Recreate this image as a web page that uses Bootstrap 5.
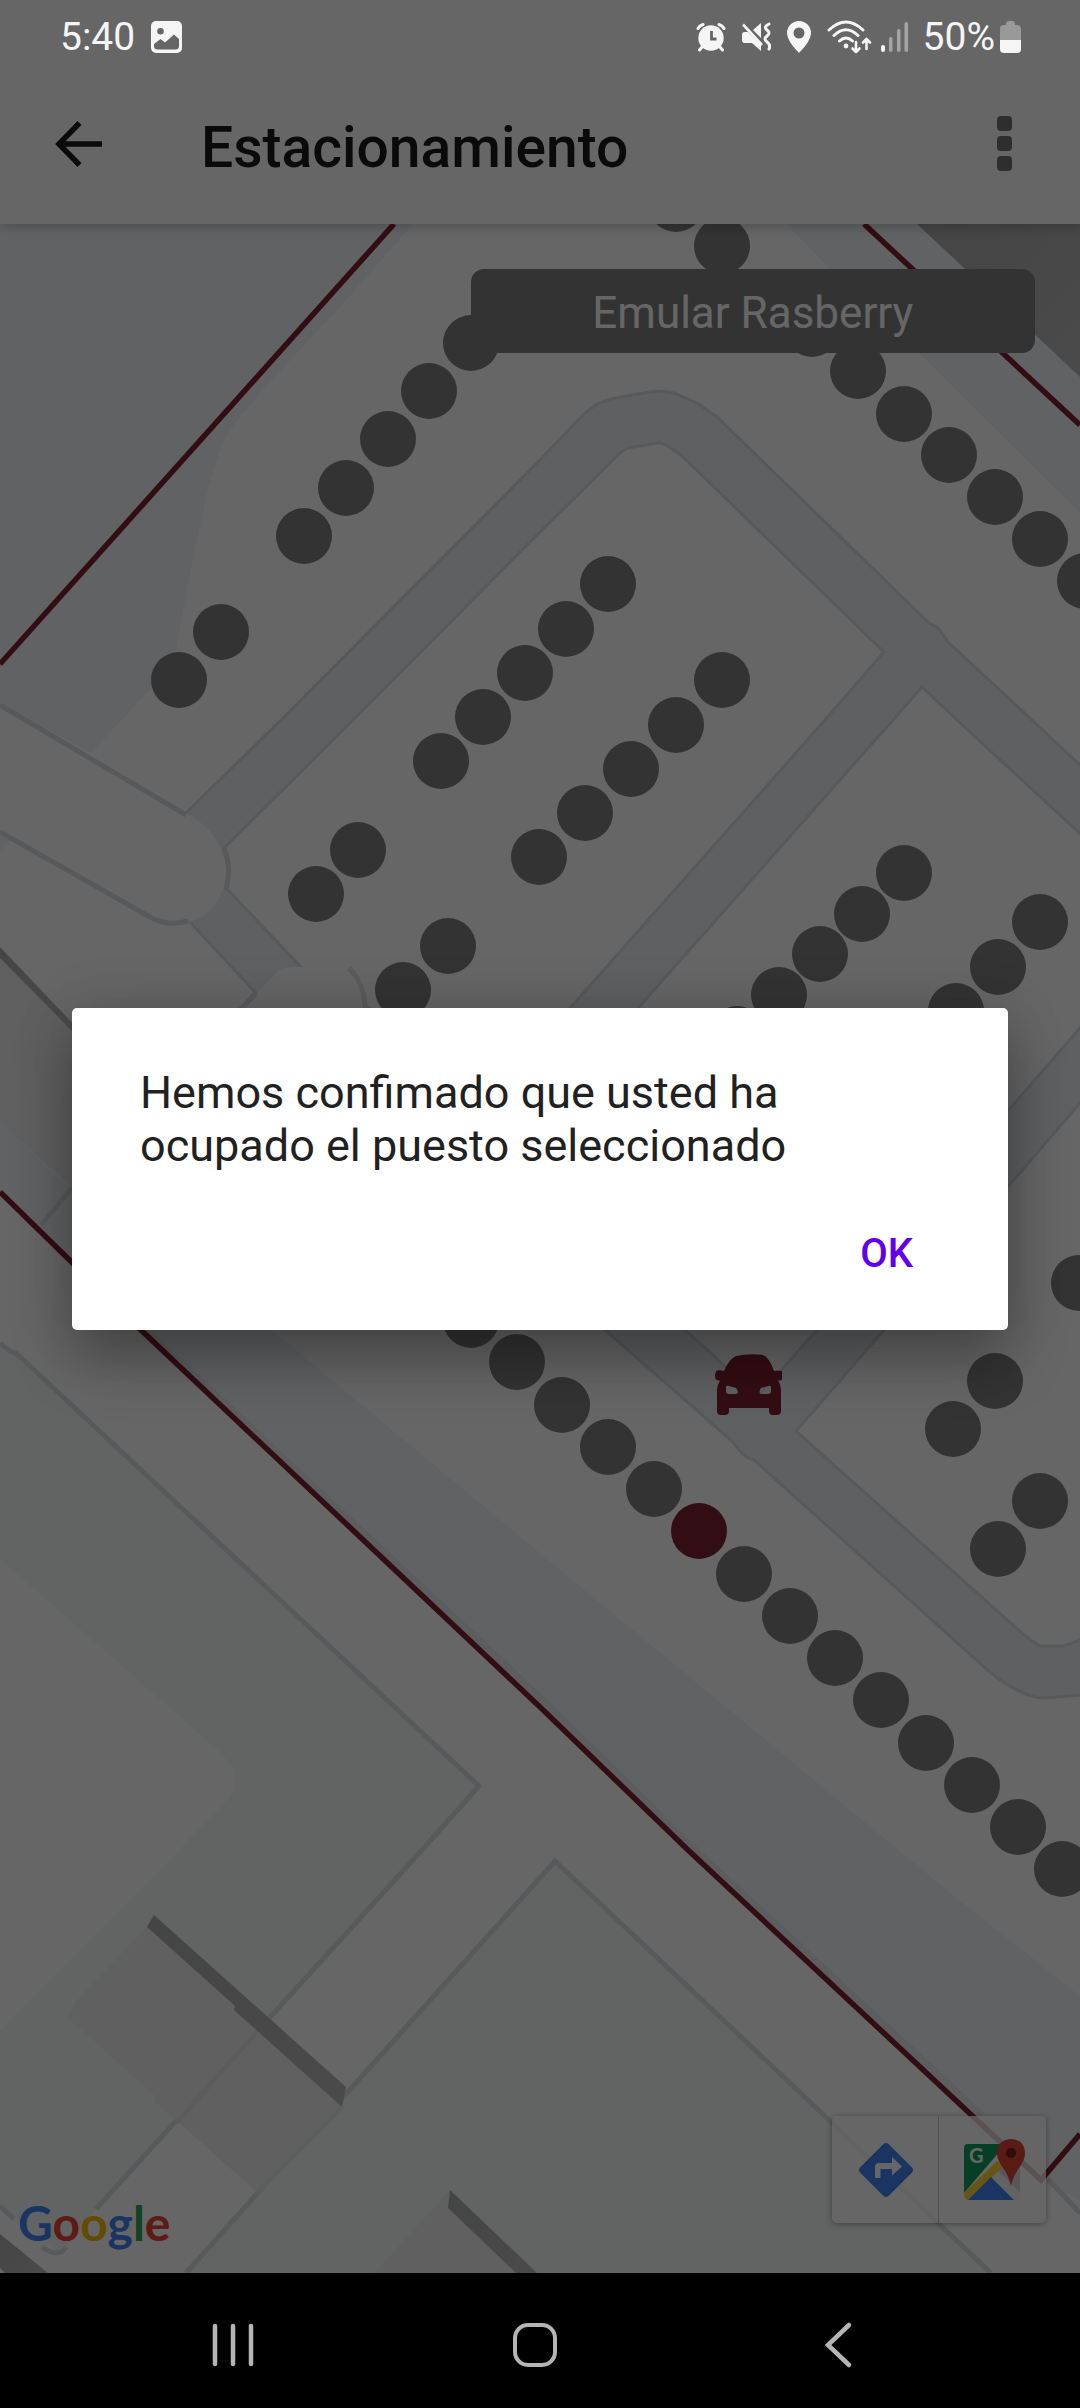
<!DOCTYPE html>
<html lang="es">
<head>
<meta charset="utf-8">
<meta name="viewport" content="width=device-width, initial-scale=1">
<title>Estacionamiento</title>
<link href="https://cdn.jsdelivr.net/npm/bootstrap@5.3.0/dist/css/bootstrap.min.css" rel="stylesheet">
<style>
  body { font-family: Roboto, "Noto Sans", sans-serif; background: #000; color: #212121; }
  svg { display: block; flex: none; }
  .status-bar { height: 74px; padding: 0 59px 0 60px; color: #f5f5f5; font-size: 39px; line-height: 48px; z-index: 1060; }
  .status-icons { gap: 15px; }
  .status-battery { gap: 5px; }
  .status-clock { gap: 16px; }
  .app-screen { background: #fff; }
  .app-bar { height: 224px; padding: 72px 64px 8px 54px; box-shadow: 0 3px 12px rgba(0, 0, 0, .22); z-index: 2; }
  .app-title { font-size: 57px; line-height: 64px; font-weight: 500; color: #191919; margin: 8px 0 0 96px; }
  .map-art { width: 100%; height: auto; }
  .map-top { padding: 45px 45px 0; }
  .btn-emular { width: 57%; height: 84px; border-radius: 13px; background: #808080; color: #fff; font-size: 44px; line-height: 52px; padding: 4px 12px 0; border: 0; }
  .btn-emular:hover { background: #707070; color: #fff; }
  .map-foot { padding: 0 34px 50px 18px; }
  .map-tools { background: rgba(255, 255, 255, .78); border-radius: 5px; box-shadow: 0 1px 6px rgba(0, 0, 0, .35); }
  .map-tools .btn { width: 107px; height: 107px; padding: 0; border: 0; border-radius: 0; }
  .map-tools .btn + .btn { box-shadow: -1px 0 0 rgba(0, 0, 0, .22); }
  .g-logo { font-family: Lato, sans-serif; font-weight: 700; font-size: 48px; line-height: 60px; margin-bottom: -30px; }
  .g-blue { color: #4285f4; } .g-red { color: #ea4335; } .g-yellow { color: #fbbc05; } .g-green { color: #34a853; }
  .scrim { background: rgba(0, 0, 0, .6); padding: 65px 72px 0; z-index: 1050; }
  .alert-sheet { background: #fff; border-radius: 5px; padding: 58px 52px 22px 68px; box-shadow: 0 30px 60px rgba(0, 0, 0, .3), 0 0 60px rgba(0, 0, 0, .12); }
  .alert-text { font-size: 45px; line-height: 53px; margin: 0 60px 28px 0; color: #212121; }
  .btn-ok { height: 108px; padding: 0 43px; border: 0; font-size: 40px; line-height: 46px; font-weight: 500; color: #6200ee; }
  .system-nav { background: #000; height: 135px; padding: 8px 9px 0 0; }
  .system-nav .btn { width: 28.200%; height: 127px; padding: 0; border: 0; }
</style>
</head>
<body>
<div class="d-flex flex-column min-vh-100">
  <div class="app-screen position-relative flex-grow-1 d-flex flex-column">

    <div class="status-bar position-absolute top-0 start-0 end-0 d-flex justify-content-between align-items-center">
      <div class="status-clock d-flex align-items-center">
        <span>5:40</span>
        <svg width="31" height="32" viewBox="0 0 31 32" aria-hidden="true"><path fill="#f5f5f5" fill-rule="evenodd" d="M5 0h21a5 5 0 0 1 5 5v22a5 5 0 0 1-5 5H5a5 5 0 0 1-5-5V5a5 5 0 0 1 5-5ZM9.500 7a3.300 3.300 0 1 0 .01 6.600A3.300 3.300 0 0 0 9.500 7ZM3 23v2q0 3.500 3.500 3.500h18q3.500 0 3.500-3.500v-7l-5-4.500-9 8-4.500-3.500Z"/></svg>
      </div>
      <div class="status-icons d-flex align-items-center">
        <svg width="30" height="30" viewBox="0 0 30 30" aria-hidden="true"><g fill="none" stroke="#f5f5f5" stroke-width="3" stroke-linecap="round"><path d="M2 6.500Q3.500 3.500 7 2.500M28 6.500Q26.500 3.500 23 2.500M6 25l-2.500 3M24 25l2.500 3"/></g><circle cx="15" cy="16" r="12.700" fill="#f5f5f5"/><path d="M15.500 9v8h5" fill="none" stroke="#666" stroke-width="2.800"/></svg>
        <svg width="30" height="30" viewBox="0 0 30 30" aria-hidden="true"><path fill="#f5f5f5" d="M3.500 10H7l13 13v6l-9-8H3.500Q1 21 1 18v-5q0-3 2.500-3ZM12 8l8-7v15Z"/><path d="M2 2.500 21 23" stroke="#f5f5f5" stroke-width="2.600"/><path d="M28 2q-6 3-2 6t0 6 0 6 2 7" fill="none" stroke="#f5f5f5" stroke-width="3" stroke-linecap="round"/></svg>
        <svg width="26" height="32" viewBox="0 0 26 32" aria-hidden="true"><path fill="#f5f5f5" fill-rule="evenodd" d="M13 0a12 12 0 0 1 12 12q0 8-12 20Q1 20 1 12A12 12 0 0 1 13 0Zm0 6.500a5.500 5.500 0 1 0 .01 11A5.500 5.500 0 0 0 13 6.500Z"/></svg>
        <svg width="81" height="34" viewBox="0 0 81 34" aria-hidden="true"><g fill="none" stroke="#f5f5f5" stroke-width="3" stroke-linecap="round" stroke-linejoin="round"><path d="M2 10Q19-6 36 10M7 15.500q12-11.500 24 0M12.500 21q6.500-6 13 0"/><path stroke-width="2.600" d="M29 22v10m-3.500-3.500L29 32l3.500-3.500M39.500 29V19m-3.500 3.500 3.500-3.500 3.500 3.500"/></g><circle cx="19" cy="26" r="2.400" fill="#f5f5f5"/><rect x="54" y="25" width="4" height="7" rx="2" fill="#f5f5f5"/><g fill="#a3a3a3"><rect x="62" y="17" width="3.500" height="15" rx="1.700"/><rect x="70" y="9" width="3.500" height="23" rx="1.700"/><rect x="77.500" y="2" width="3.500" height="30" rx="1.700"/></g></svg>
        <div class="status-battery d-flex align-items-center">
          <span>50%</span>
          <svg width="21" height="32" viewBox="0 0 21 32" aria-hidden="true"><path fill="#999" d="M6 3q0-3 3-3h3q3 0 3 3v1h2q4 0 4 4v11H0V8q0-4 4-4h2Z"/><path fill="#f5f5f5" d="M0 19h21v9q0 4-4 4H4q-4 0-4-4Z"/></svg>
        </div>
      </div>
    </div>

    <header class="app-bar position-relative bg-white d-flex align-items-center">
      <button type="button" class="btn p-0 border-0" aria-label="Atrás">
        <svg width="51" height="48" viewBox="0 0 51 48"><path d="M48 24H7M25.500 3 5 24l20.500 21" fill="none" stroke="#191919" stroke-width="5.500"/></svg>
      </button>
      <h1 class="app-title flex-grow-1">Estacionamiento</h1>
      <button type="button" class="btn p-0 border-0" aria-label="Más opciones">
        <svg width="23" height="56" viewBox="0 0 23 56"><g fill="#737373"><rect x="4" y="0" width="15" height="15" rx="4"/><rect x="4" y="20" width="15" height="15" rx="4"/><rect x="4" y="40" width="15" height="15" rx="4"/></g></svg>
      </button>
    </header>

    <main class="position-relative">
      <svg class="map-art" viewBox="0 224 1080 2049" role="img" aria-label="Mapa del estacionamiento">
        <defs>
          <linearGradient id="wall" x1="0" y1="0" x2="1" y2="1"><stop offset="0" stop-color="#acacac"/><stop offset="1" stop-color="#bababa"/></linearGradient>
        </defs>
        <rect y="224" width="1080" height="2049" fill="#fff"/>
        <!-- paved surroundings -->
        <g fill="#f3f6fa">
          <path d="M0 224H413L344 303 269 383 236 422Q222 440 217 460L207 493 189 580 176 650 150 690 91 753 0 703Z"/>
          <path d="M786 224H1080V513L919 353 829 268Z"/>
          <path d="M0 828l10 12-10 11ZM0 1122 69 1187 272 1330 540 1553 953 1895 1080 1996V2200L1041 2181 688 1850 540 1707 141 1330 0 1192Z"/>
        </g>
        <path d="M917 224H1080V377L964 268Z" fill="url(#wall)"/>
        <!-- green areas -->
        <g fill="#f4f9f7">
          <path d="M0 1343 17 1354 479 1786 422 1850 96 2209 59 2252 0 2206V2031L179 1850 227 1800Q240 1784 232 1766L220 1752 0 1559Z"/>
          <path d="M555 1861 829 2120 991 2273H186L346 2094Z"/>
        </g>
        <g fill="none" stroke="#dddfe3" stroke-width="5" stroke-linejoin="round">
          <path d="M0 1343Q10 1352 17 1354L479 1786 422 1850 96 2209M0 2206 14 2219M42 2247q17 12 24 0M186 2273 346 2094 555 1861 829 2120 991 2273M1048 2179 1080 2213M72 1188 41 1225"/>
          <path d="M146 1330 545 1702 690 1845 982 2115" stroke-opacity=".6" stroke-width="7"/>
        </g>
        <!-- parking lanes -->
        <path fill="#eef0f4" fill-rule="evenodd" stroke="#dddfe3" stroke-width="3" d="M186 813 281 720 540 460 585 413 597 404Q606 400 616 398L650 392Q662 390 674 393L697 403 717 417 929 623 938 628 948 642 1032 720 1100 784V1694L1070 1696 1043 1698Q1022 1697 991 1673L754 1460Q745 1458 740 1451L733 1442 605 1330 256 993 188 920ZM226 888 301 967 500 1087 571 1007 825 720 884 652 681 455 666 445Q661 442 657 443L628 448 621 452 540 532 353 720 224 848ZM922 687 893 720 639 1007 520 1187 685 1330 758 1396 817 1330 1080 1028 1100 1005V852L957 720ZM1100 1080 884 1330 796 1431 1024 1635 1039 1646 1063 1646Q1075 1643 1100 1630Z"/>
        <!-- access streets -->
        <path fill="#fff" d="M0 705 186 813Q222 832 227 870 222 915 188 922 168 925 150 915L0 830Z"/>
        <path fill="none" stroke="#dddfe3" stroke-width="5" d="M0 705 186 815M0 832 150 917Q168 927 188 921M224 848q8 18 2 42M256 993 240 1010"/>
        <path fill="#fff" d="M258 992 279 970Q290 965 301 967H351Q366 984 367 1007V1040H248Z"/>
        <path fill="none" stroke="#e4e6ea" stroke-width="5" d="M349 968Q365 984 365 1010"/>
        <!-- buildings -->
        <g fill="#f0f0f0">
          <path d="M0 958 72 1030V1188L0 1122Z"/>
          <path d="M148 1926 76 2001 67 2017 155 2096V2102L257 2192 342 2107 234 2006Z"/>
          <path d="M450 2190 374 2273H516L448 2208Z"/>
        </g>
        <path d="M270 2017 177 2122" stroke="#e6e6e8" stroke-width="5"/>
        <path d="M342 2107 257 2192" stroke="#e8e8ea" stroke-width="5"/>
        <g fill="url(#wall)">
          <path d="M0 947 80 1031H72L0 958Z"/>
          <path d="M154 1915 346 2087 342 2107 234 2010 235 2006 147 1927Z"/>
          <path d="M450 2190 537 2273H516L448 2208Z"/>
          <path d="M0 2234 48 2273H5L0 2268Z"/>
        </g>
        <!-- lot boundary -->
        <g fill="none" stroke="#802132" stroke-width="5.500">
          <path d="M394 224 0 664M864 224 1080 425M0 1192 141 1330 540 1707 688 1850 1041 2180 1080 2134"/>
        </g>
        <!-- parking spots -->
        <g fill="#808080">
          <circle cx="179" cy="680" r="28"/><circle cx="221" cy="632" r="28"/><circle cx="304" cy="536" r="28"/><circle cx="346" cy="488" r="28"/><circle cx="388" cy="439" r="28"/><circle cx="429" cy="391" r="28"/><circle cx="471" cy="343" r="28"/>
          <circle cx="676" cy="204" r="28"/><circle cx="722" cy="246" r="28"/><circle cx="812" cy="329" r="28"/><circle cx="858" cy="371" r="28"/><circle cx="904" cy="414" r="28"/><circle cx="949" cy="455" r="28"/><circle cx="995" cy="497" r="28"/><circle cx="1040" cy="539" r="28"/><circle cx="1085" cy="581" r="28"/>
          <circle cx="608" cy="584" r="28"/><circle cx="566" cy="629" r="28"/><circle cx="525" cy="673" r="28"/><circle cx="483" cy="717" r="28"/><circle cx="441" cy="761" r="28"/><circle cx="358" cy="850" r="28"/><circle cx="316" cy="894" r="28"/>
          <circle cx="722" cy="680" r="28"/><circle cx="676" cy="725" r="28"/><circle cx="631" cy="769" r="28"/><circle cx="585" cy="813" r="28"/><circle cx="539" cy="857" r="28"/><circle cx="448" cy="946" r="28"/><circle cx="403" cy="990" r="28"/>
          <circle cx="904" cy="873" r="28"/><circle cx="862" cy="914" r="28"/><circle cx="820" cy="954" r="28"/><circle cx="779" cy="995" r="28"/><circle cx="737" cy="1034" r="28"/>
          <circle cx="1040" cy="922" r="28"/><circle cx="998" cy="967" r="28"/><circle cx="956" cy="1011" r="28"/><circle cx="1079" cy="1283" r="28"/>
          <circle cx="995" cy="1381" r="28"/><circle cx="953" cy="1429" r="28"/><circle cx="1040" cy="1501" r="28"/><circle cx="998" cy="1549" r="28"/>
          <circle cx="471" cy="1320" r="28"/><circle cx="517" cy="1362" r="28"/><circle cx="562" cy="1405" r="28"/><circle cx="608" cy="1447" r="28"/><circle cx="654" cy="1489" r="28"/><circle cx="744" cy="1574" r="28"/><circle cx="790" cy="1616" r="28"/><circle cx="835" cy="1658" r="28"/><circle cx="881" cy="1700" r="28"/><circle cx="926" cy="1743" r="28"/><circle cx="972" cy="1785" r="28"/><circle cx="1018" cy="1827" r="28"/><circle cx="1062" cy="1869" r="28"/>
        </g>
        <circle cx="699" cy="1531" r="28" fill="#802132"/>
        <path fill="#802132" fill-rule="evenodd" d="M724 1371Q729 1359 736 1356 749 1353 763 1355 769 1357 774 1371 776 1370 782 1371V1379Q782 1381 778 1380.500 781 1385 781 1390V1411Q781 1415 777 1415H773Q769 1415 769 1411V1408H729V1411Q729 1415 725 1415H721Q717 1415 717 1411V1390Q717 1385 720 1380.500H718Q715 1380 715 1376 715 1370 719 1370ZM726 1387Q726 1385 729 1386L736 1388Q740 1393 736 1394H729Q726 1394 726 1391ZM771 1387Q771 1385 768 1386L761 1388Q758 1393 761 1394H768Q771 1394 771 1391Z"/>
      </svg>

      <div class="map-top position-absolute top-0 start-0 end-0 d-flex justify-content-end">
        <button type="button" class="btn btn-emular">Emular Rasberry</button>
      </div>

      <div class="map-foot position-absolute bottom-0 start-0 end-0 d-flex justify-content-between align-items-end">
        <div class="g-logo"><span class="g-blue">G</span><span class="g-red">o</span><span class="g-yellow">o</span><span class="g-blue">g</span><span class="g-green">l</span><span class="g-red">e</span></div>
        <div class="map-tools d-flex">
          <button type="button" class="btn d-flex align-items-center justify-content-center" aria-label="Cómo llegar">
            <svg width="56" height="56" viewBox="0 0 56 56"><path fill="#4285f4" d="M25.500 2q2.500-2 5 0L54 25.500q2 2.500 0 5L30.500 54q-2.500 2-5 0L2 30.500q-2-2.500 0-5Z"/><path fill="#fff" d="M17 36V25q0-4 4-4h13v-6l10 9.500-10 9V27H22.500v9Z"/></svg>
          </button>
          <button type="button" class="btn d-flex align-items-center justify-content-center" aria-label="Abrir en Google Maps">
            <svg width="64" height="62" viewBox="0 0 64 62"><path fill="#dadada" d="M32 32 55 10q4 0 4 4v44Z"/><path fill="#f5f5f5" d="M30 36 36 31 59 53v4q0 4-5 4Z"/><path fill="#0f9d58" d="M7 5h38L3 54V9q0-4 4-4Z"/><path fill="#fdd835" d="M3 54 36 22l8 4L7 61q-4-1-4-7Z"/><path fill="#4285f4" d="M30 38 53 61H7Z"/><path fill="#db4437" d="M50 0q14 1 14 14 0 7-6 15-6 8-8 18-2-10-8-18-6-8-6-15Q36 1 50 0Z"/><circle cx="50" cy="14" r="5" fill="#7b1f18"/><text x="8" y="24" font-family="Lato, sans-serif" font-weight="700" font-size="20" fill="#fff">G</text></svg>
          </button>
        </div>
      </div>
    </main>

    <div class="scrim position-absolute top-0 start-0 end-0 bottom-0 d-flex align-items-center">
      <div class="alert-sheet w-100" role="alertdialog" aria-modal="true" aria-describedby="aviso">
        <p id="aviso" class="alert-text">Hemos confimado que usted ha ocupado el puesto seleccionado</p>
        <div class="d-flex justify-content-end">
          <button type="button" class="btn btn-ok">OK</button>
        </div>
      </div>
    </div>
  </div>

  <nav class="system-nav d-flex justify-content-center" aria-label="Navegación del sistema">
    <button type="button" class="btn d-flex align-items-center justify-content-center" aria-label="Recientes">
      <svg width="44" height="46" viewBox="0 0 44 46"><path d="M4 4v38M22 4v38M40 4v38" stroke="#b5b5b5" stroke-width="4.500" stroke-linecap="round"/></svg>
    </button>
    <button type="button" class="btn d-flex align-items-center justify-content-center" aria-label="Inicio">
      <svg width="46" height="46" viewBox="0 0 46 46"><rect x="3" y="3" width="40" height="40" rx="13" fill="none" stroke="#b5b5b5" stroke-width="4"/></svg>
    </button>
    <button type="button" class="btn d-flex align-items-center justify-content-center" aria-label="Volver">
      <svg width="30" height="48" viewBox="0 0 30 48"><path d="M26 4 5 24l21 20" fill="none" stroke="#b5b5b5" stroke-width="4.500" stroke-linecap="round"/></svg>
    </button>
  </nav>
</div>
<script src="https://cdn.jsdelivr.net/npm/bootstrap@5.3.0/dist/js/bootstrap.bundle.min.js"></script>
</body>
</html>
